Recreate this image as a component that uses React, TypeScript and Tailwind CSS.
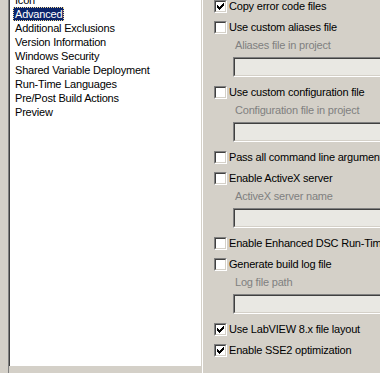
const font = { fontFamily: '"Liberation Sans", Arial, sans-serif' };

const listItems = [
  'Icon',
  'Advanced',
  'Additional Exclusions',
  'Version Information',
  'Windows Security',
  'Shared Variable Deployment',
  'Run-Time Languages',
  'Pre/Post Build Actions',
  'Preview',
];

type Option = { label: string; checked: boolean; field?: string };

const options: Option[] = [
  { label: 'Copy error code files', checked: true },
  { label: 'Use custom aliases file', checked: false, field: 'Aliases file in project' },
  { label: 'Use custom configuration file', checked: false, field: 'Configuration file in project' },
  { label: 'Pass all command line arguments to application', checked: false },
  { label: 'Enable ActiveX server', checked: false, field: 'ActiveX server name' },
  { label: 'Enable Enhanced DSC Run-Time Support', checked: false },
  { label: 'Generate build log file', checked: false, field: 'Log file path' },
  { label: 'Use LabVIEW 8.x file layout', checked: true },
  { label: 'Enable SSE2 optimization', checked: true },
];

function CheckBox({ checked }: { checked: boolean }) {
  return (
    <div className="w-[13px] h-[13px] shrink-0 border border-t-[#808080] border-l-[#808080] border-b-white border-r-white">
      <div className="w-full h-full border border-t-[#404040] border-l-[#404040] border-b-[#d4d0c8] border-r-[#d4d0c8] bg-white">
        {checked && (
          <svg width="9" height="9" viewBox="0 0 9 9" shapeRendering="crispEdges">
            <path
              fill="#000"
              d="M7 1h1v1h-1z M6 2h2v1h-2z M1 3h1v1h-1z M5 3h3v1h-3z M1 4h2v1h-2z M4 4h3v1h-3z M1 5h5v1h-5z M2 6h3v1h-3z M3 7h1v1h-1z"
            />
          </svg>
        )}
      </div>
    </div>
  );
}

function PathField() {
  return (
    <div className="ml-[19px] mt-[5px] w-[170px] h-[20px] shrink-0 border border-t-[#808080] border-l-[#808080] border-b-white border-r-white">
      <div className="w-full h-full border border-t-[#404040] border-l-[#404040] border-b-[#d4d0c8] border-r-[#d4d0c8] bg-[#e9e8e3]" />
    </div>
  );
}

export default function App() {
  return (
    <div
      className="w-[380px] h-[373px] overflow-hidden bg-[#d4d0c8] flex text-[11px] tracking-[-0.2px] text-black"
      style={font}
    >
      {/* category list */}
      <div className="ml-[8px] w-[195px] shrink-0 border-l border-r border-l-[#808080] border-r-white">
        <div className="h-full border-l border-r border-l-[#404040] border-r-[#d4d0c8] bg-white">
          <div className="mt-[-7px] flex flex-col">
            {listItems.map((item) => (
              <div key={item} className="h-[14px] pl-[3px] flex">
                {item === 'Advanced' ? (
                  <span className="px-[1px] h-[14px] leading-[12px] bg-[#0a246a] text-white border border-dotted border-[#f5db95]">
                    {item}
                  </span>
                ) : (
                  <span className="px-[2px] leading-[14px] whitespace-nowrap">{item}</span>
                )}
              </div>
            ))}
          </div>
        </div>
      </div>

      {/* options */}
      <div className="relative flex-1 pl-[11px] flex flex-col whitespace-nowrap">
        {options.map((opt, i) => {
          const gap = i === 0 ? '' : options[i - 1].field ? 'mt-[9px]' : 'mt-[8px]';
          return (
            <div key={opt.label} className="flex flex-col">
              <div className={`${gap} h-[13px] flex items-center gap-[2px]`}>
                <CheckBox checked={opt.checked} />
                <span className="leading-[13px]">{opt.label}</span>
              </div>
              {opt.field && (
                <>
                  <div className="mt-[4px] ml-[21px] h-[14px] leading-[14px] text-[#808080]">{opt.field}</div>
                  <PathField />
                </>
              )}
            </div>
          );
        })}
        <svg className="absolute right-[2px] bottom-[1px]" width="4" height="4" viewBox="0 0 4 4" shapeRendering="crispEdges">
          <path fill="#404040" d="M3 0h1v1h-1z M2 1h1v1h-1z M1 2h1v1h-1z" />
        </svg>
      </div>
    </div>
  );
}
